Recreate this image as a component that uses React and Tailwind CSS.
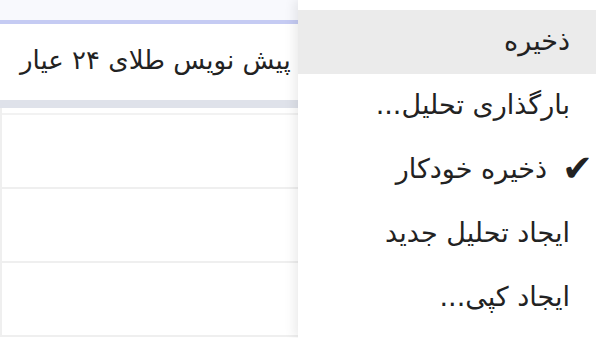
import React from 'react';

const items = [
  { label: 'ذخیره', active: true },
  { label: 'بارگذاری تحلیل...' },
  { label: 'ذخیره خودکار', checked: true },
  { label: 'ایجاد تحلیل جدید' },
  { label: 'ایجاد کپی...' },
];

export default function App(){
  return (
    <div className="relative w-[596px] h-[338px] overflow-hidden bg-white text-[#222]" style={{ fontFamily: '"DejaVu Sans", sans-serif' }}>
      {/* page behind the menu */}
      <div className="flex flex-col w-full">
        <div className="h-[20px] bg-[#f8f9fd]" />
        <div className="h-[4px] bg-[#c5cbf3]" />
        <div dir="rtl" className="h-[76px] flex items-center pl-[20px] pb-[4px] text-[26px] leading-none whitespace-nowrap">
          <span className="w-full text-left">پیش نویس طلای ۲۴ عیار</span>
        </div>
        <div className="h-[8px] bg-[#dfe2ea]" />
        <div className="border-l-2 border-[#efefef]">
          <div className="h-[7px] border-b-2 border-[#f2f2f2]" />
          <div className="h-[74px] border-b-2 border-[#efefef]" />
          <div className="h-[74px] border-b-2 border-[#efefef]" />
          <div className="h-[74px] border-b-2 border-[#efefef]" />
        </div>
      </div>

      {/* dropdown menu */}
      <div dir="rtl" className="absolute top-0 right-0 w-[298px] h-full bg-white pt-[10px] shadow-[-4px_0_10px_rgba(0,0,0,0.08)]">
        {items.map((it) => (
          <div key={it.label} className={`relative h-[64px] flex items-center pr-[26px] pb-[4px] text-[27px] leading-none whitespace-nowrap ${it.active ? 'bg-[#ebebeb]' : ''}`}>
            {it.checked && <span className="absolute right-[3px] top-[12px] w-[24px] text-[37px] leading-none text-center">✔</span>}
            <span className={it.checked ? 'mr-[23px]' : ''}>{it.label}</span>
          </div>
        ))}
      </div>
    </div>
  );
}
